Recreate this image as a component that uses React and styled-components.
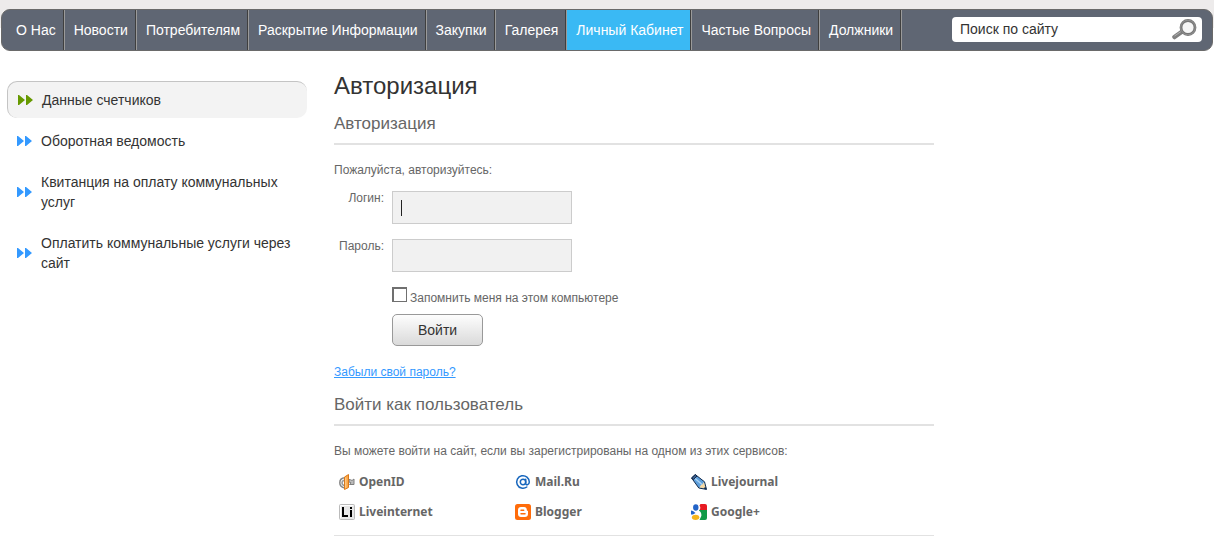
import { useState } from "react";
import styled, { createGlobalStyle } from "styled-components";

const GlobalStyle = createGlobalStyle`
  * {
    box-sizing: border-box;
  }
  body {
    margin: 0;
    background: #fff;
    color: #666;
    font-family: "Liberation Sans", Arial, sans-serif;
    font-size: 12px;
    line-height: 16px;
  }
`;

const Header = styled.header`
  padding: 9px 1px 0;
  background: linear-gradient(#edebeb 12px, #eeecec 28px, #fff 28px);
`;

const NavBar = styled.div`
  display: flex;
  align-items: center;
  min-height: 42px;
  padding: 0 10px 0 4px;
  border: 1px solid #6a6a6a;
  border-radius: 9px;
  background: #5f6673;
`;

const Nav = styled.nav`
  display: flex;
`;

const NavLink = styled.a`
  padding: 0 7px 0 9px;
  border-left: 1px solid ${({ $first }) => ($first ? "transparent" : "#9a9a9a")};
  border-right: 1px solid #3f3f3f;
  background-color: ${({ $active }) => ($active ? "#3ab9f4" : "transparent")};
  color: #fff;
  font-size: 14px;
  line-height: 40px;
  text-decoration: none;
  white-space: nowrap;
  &:last-child {
    box-shadow: 1px 0 #9a9a9a;
  }
`;

const SearchForm = styled.form`
  display: flex;
  align-items: center;
  width: 250px;
  height: 25px;
  margin-left: auto;
  margin-bottom: 1px;
  padding: 0 5px 0 8px;
  border-radius: 4px;
  background: #fff;
`;

const SearchInput = styled.input`
  flex: 1;
  min-width: 0;
  padding: 0 0 1px;
  border: 0;
  outline: 0;
  background: transparent;
  color: #333;
  font-family: inherit;
  font-size: 14px;
`;

const SearchButton = styled.button`
  display: flex;
  padding: 0;
  border: 0;
  background: transparent;
  cursor: pointer;
`;

const Page = styled.div`
  display: grid;
  grid-template-columns: 300px minmax(0, 600px);
  column-gap: 27px;
  padding: 21px 7px 13px;
`;

const Sidebar = styled.nav`
  display: flex;
  flex-direction: column;
  gap: 4px;
  padding-top: 9px;
`;

const SideLink = styled.a`
  display: flex;
  align-items: center;
  gap: 9px;
  padding: 8px 10px;
  border-style: solid;
  border-color: ${({ $active }) => ($active ? "#c4c4c4" : "transparent")};
  border-width: ${({ $active }) => ($active ? "1px 0 0 1px" : "1px 0 0")};
  border-radius: 10px;
  background-color: ${({ $active }) => ($active ? "#f3f3f3" : "transparent")};
  color: #333;
  font-size: 14px;
  line-height: 20px;
  text-decoration: none;
  svg {
    flex: none;
    fill: ${({ $active }) => ($active ? "#669900" : "#3399ff")};
  }
`;

const Content = styled.main`
  min-width: 0;
`;

const Title = styled.h1`
  margin: 0 0 13px;
  color: #333;
  font-size: 24px;
  font-weight: normal;
  line-height: 28px;
`;

const SectionTitle = styled.h2`
  margin: 0 0 17px;
  padding-bottom: 8px;
  border-bottom: 2px solid #e2e2e2;
  font-size: 17px;
  font-weight: normal;
  line-height: 22px;
`;

const Text = styled.p`
  margin: 0;
`;

const LoginForm = styled.form`
  display: grid;
  grid-template-columns: 50px 1fr;
  column-gap: 8px;
  row-gap: 15px;
  margin: 13px 0 18px;
`;

const FieldLabel = styled.label`
  line-height: 14px;
  text-align: right;
`;

const FieldInput = styled.input`
  width: 180px;
  height: 33px;
  padding: 0 8px;
  border: 1px solid #ccc;
  border-radius: 0;
  outline: 0;
  background-color: #f1f1f1;
  color: #333;
  font-family: inherit;
  font-size: 14px;
  caret-color: ${({ $cursor }) => ($cursor ? "transparent" : "auto")};
  background-image: ${({ $cursor }) =>
    $cursor ? "linear-gradient(#222, #222)" : "none"};
  background-repeat: no-repeat;
  background-position: 8px center;
  background-size: 1px 16px;
`;

const Actions = styled.div`
  grid-column: 2;
  display: flex;
  flex-direction: column;
  align-items: flex-start;
  gap: 8px;
`;

const Remember = styled.div`
  display: flex;
  align-items: flex-start;
  gap: 3px;
  label {
    padding-top: 3px;
  }
`;

const Checkbox = styled.input`
  appearance: none;
  width: 15px;
  height: 15px;
  margin: 0;
  border: 2px solid #707070;
  border-right-width: 1px;
  border-bottom-width: 1px;
  background: #fff;
  &:checked {
    box-shadow: inset 0 0 0 2px #fff;
    background: #707070;
  }
`;

const SubmitButton = styled.button`
  height: 32px;
  padding: 0 25px;
  border: 1px solid #999;
  border-radius: 5px;
  background: linear-gradient(#fdfdfd, #dadada);
  color: #333;
  font-family: inherit;
  font-size: 14px;
  cursor: pointer;
`;

const ForgotLink = styled.a`
  display: block;
  width: fit-content;
  margin-bottom: 14px;
  color: #3399ff;
`;

const Services = styled.div`
  display: grid;
  grid-template-columns: repeat(3, 176px);
  margin-top: 8px;
  padding: 0 0 8px 5px;
  border-bottom: 1px solid #e2e2e2;
`;

const ServiceLink = styled.a`
  display: flex;
  align-items: center;
  gap: 4px;
  height: 30px;
  color: #666;
  font-family: "Noto Sans", Tahoma, sans-serif;
  font-size: 12px;
  font-weight: bold;
  text-decoration: none;
`;

const navItems = [
  "О Нас",
  "Новости",
  "Потребителям",
  "Раскрытие Информации",
  "Закупки",
  "Галерея",
  "Личный Кабинет",
  "Частые Вопросы",
  "Должники",
];

const sideItems = [
  "Данные счетчиков",
  "Оборотная ведомость",
  "Квитанция на оплату коммунальных услуг",
  "Оплатить коммунальные услуги через сайт",
];

const SearchIcon = () => (
  <svg width="25" height="21" viewBox="0 0 25 21" fill="none">
    <path d="M2.500 18 9.500 13" stroke="#808080" strokeWidth="4.500" strokeLinecap="round" />
    <path d="M2.500 17 9 12.500" stroke="#b0b0b0" />
    <circle cx="16" cy="8.500" r="7" fill="#f6f6f6" stroke="#777" strokeWidth="2.800" />
    <circle cx="16" cy="8.500" r="7.300" stroke="#999" strokeWidth=".8" />
  </svg>
);

const ArrowsIcon = () => (
  <svg width="15" height="10" viewBox="0 0 15 10">
    <path d="M0 0h1l6 5-6 5H0zM8 0h1l6 5-6 5H8z" />
  </svg>
);

const OpenIdIcon = () => (
  <svg width="16" height="16" viewBox="0 0 16 16" fill="none">
    <path d="M6 3.800C2.800 4 .8 6.200.8 8.800s2 4.800 5.200 5.200" stroke="#858585" strokeWidth="1.500" />
    <path d="M6 6.300C4.200 6.500 3 7.500 3 9s1.200 2.400 3 2.700" stroke="#999" strokeWidth="1.500" />
    <path d="M10 5.500c1.200 0 2.200.4 3 1l2-1.500v5.500h-4.500l1.500-1.700-2-.8z" fill="#bbb" stroke="#808080" />
    <path d="M5.500 3 9.500.5v13l-4 2z" fill="#fca644" stroke="#d9781a" />
    <path d="M6.800 3.500v10.700" stroke="#ffd49a" />
  </svg>
);

const MailRuIcon = () => (
  <svg width="16" height="16" viewBox="0 0 16 16" fill="none" stroke="#1766bd">
    <circle cx="8" cy="8" r="2.700" strokeWidth="1.500" />
    <path
      d="M10.700 5.300v4.200c0 2 3.600 1.600 3.600-1.500A6.300 6.300 0 1 0 11.800 13"
      strokeWidth="1.500"
      strokeLinecap="round"
    />
  </svg>
);

const LivejournalIcon = () => (
  <svg width="16" height="16" viewBox="0 0 16 16" strokeLinejoin="round">
    <path d="M.6 4 4.300.6l9.200 7.200 2 7.600-7.700-1.400z" fill="#5d9fdc" stroke="#12294a" />
    <path d="m3.600 4 8 7" stroke="#a9d2f5" strokeWidth="1.500" />
    <path d="m8.500 13.400 1.200-2.200 1.900-.7.400-1.800 1-.3 1.700 6z" fill="#f7d9a3" />
    <path d="m12.500 14.500 1.900-1.800 1.100 2.700z" fill="#12294a" />
    <path d="M.6 4 4.300.6l1.700 1.400-3.400 3.500z" fill="#3b5f8d" stroke="#12294a" />
  </svg>
);

const LiveinternetIcon = () => (
  <svg width="16" height="16" viewBox="0 0 16 16">
    <rect x=".5" y=".5" width="15" height="15" rx="1" fill="#e8e8e8" stroke="#bbb" />
    <path d="M1.500 14V1.500H14" fill="none" stroke="#fff" />
    <path d="M3 3h2v8h4v2H3zM11 6h2v7h-2zM11 3h2v2h-2z" fill="#000" />
  </svg>
);

const BloggerIcon = () => (
  <svg width="16" height="16" viewBox="0 0 16 16">
    <rect width="16" height="16" rx="2.500" fill="#ff6c0a" />
    <path
      d="M6 3h3c1.800 0 2.800 1.200 2.800 2.800 0 .8.3 1.100 1.200 1.200v3c0 1.900-1.200 3-3 3H6c-1.800 0-3-1.200-3-3V6c0-1.800 1.200-3 3-3z"
      fill="#fff"
    />
    <path d="M6 6.200h2.700M6 9.800h4" stroke="#ff6c0a" strokeWidth="1.500" strokeLinecap="round" />
  </svg>
);

const GoogleIcon = () => (
  <svg width="16" height="16" viewBox="0 0 16 16">
    <path d="M8 0h6a2 2 0 0 1 2 2v4H7z" fill="#e81b23" />
    <path d="M8 6h8v8a2 2 0 0 1-2 2H8z" fill="#109a47" />
    <path
      d="M5 0h4.500l-1 1.500c1.500 2 .8 4-.7 5 1.800 1.200 3 3 2.500 5.500L8.500 16H5L0 11l4.500-1-1.500-3.200C-.3 4.500 1 .8 5 0z"
      fill="#fff"
    />
    <ellipse cx="4.800" cy="3.500" rx="2.700" ry="3.300" fill="#2263c7" />
    <path d="M0 6.500 2 7l2.500 2L2 10.500H0z" fill="#2263c7" />
    <ellipse cx="4.600" cy="13.300" rx="3.700" ry="2.600" fill="#f5b51a" />
  </svg>
);

const services = [
  { name: "OpenID", Icon: OpenIdIcon },
  { name: "Mail.Ru", Icon: MailRuIcon },
  { name: "Livejournal", Icon: LivejournalIcon },
  { name: "Liveinternet", Icon: LiveinternetIcon },
  { name: "Blogger", Icon: BloggerIcon },
  { name: "Google+", Icon: GoogleIcon },
];

const App = () => {
  const [login, setLogin] = useState("");

  return (
    <>
      <GlobalStyle />
      <Header>
        <NavBar>
          <Nav>
            {navItems.map((item, index) => (
              <NavLink
                key={item}
                href="#"
                $first={index === 0}
                $active={item === "Личный Кабинет"}
              >
                {item}
              </NavLink>
            ))}
          </Nav>
          <SearchForm onSubmit={(e) => e.preventDefault()}>
            <SearchInput
              type="text"
              aria-label="Поиск по сайту"
              defaultValue="Поиск по сайту"
            />
            <SearchButton type="submit" aria-label="Найти">
              <SearchIcon />
            </SearchButton>
          </SearchForm>
        </NavBar>
      </Header>
      <Page>
        <Sidebar>
          {sideItems.map((item, index) => (
            <SideLink key={item} href="#" $active={index === 0}>
              <ArrowsIcon />
              <span>{item}</span>
            </SideLink>
          ))}
        </Sidebar>
        <Content>
          <Title>Авторизация</Title>
          <SectionTitle>Авторизация</SectionTitle>
          <Text>Пожалуйста, авторизуйтесь:</Text>
          <LoginForm onSubmit={(e) => e.preventDefault()}>
            <FieldLabel htmlFor="login">Логин:</FieldLabel>
            <FieldInput
              id="login"
              type="text"
              autoFocus
              value={login}
              onChange={(e) => setLogin(e.target.value)}
              $cursor={login === ""}
            />
            <FieldLabel htmlFor="password">Пароль:</FieldLabel>
            <FieldInput id="password" type="password" />
            <Actions>
              <Remember>
                <Checkbox id="remember" type="checkbox" />
                <label htmlFor="remember">Запомнить меня на этом компьютере</label>
              </Remember>
              <SubmitButton type="submit">Войти</SubmitButton>
            </Actions>
          </LoginForm>
          <ForgotLink href="#">Забыли свой пароль?</ForgotLink>
          <SectionTitle>Войти как пользователь</SectionTitle>
          <Text>
            Вы можете войти на сайт, если вы зарегистрированы на одном из этих
            сервисов:
          </Text>
          <Services>
            {services.map(({ name, Icon }) => (
              <ServiceLink key={name} href="#">
                <Icon />
                {name}
              </ServiceLink>
            ))}
          </Services>
        </Content>
      </Page>
    </>
  );
};

export default App;
